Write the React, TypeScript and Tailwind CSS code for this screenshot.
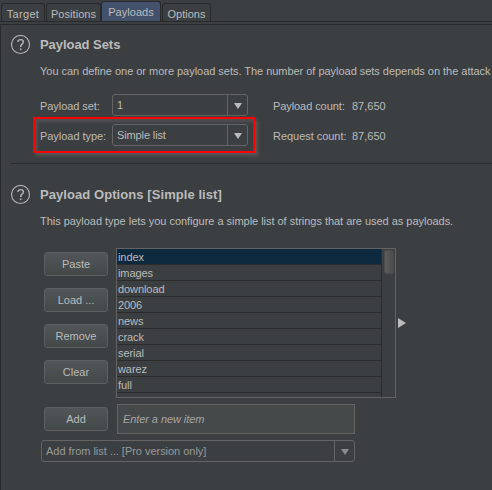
import React from "react";

const items = ["index", "images", "download", "2006", "news", "crack", "serial", "warez", "full"];

function Tab({ label, className }: { label: string; className: string }) {
  return (
    <div className={`flex justify-center rounded-t-[3px] border border-b-0 border-[#282a2c] ${className}`}>
      <span>{label}</span>
    </div>
  );
}

function HelpIcon() {
  return (
    <svg width="20" height="20" viewBox="0 0 20 20" fill="none" stroke="#b4b4b4" className="shrink-0">
      <circle cx="9.5" cy="9.5" r="9" strokeWidth="1.1" />
      <path d="M6.8 6.8C7 5.3 8 4.6 9.6 4.6C11.3 4.6 12.4 5.5 12.4 7C12.4 9 9.7 9.2 9.7 11.3V12" strokeWidth="1.4" />
      <path d="M8.9 14.3H10.5" strokeWidth="1.6" />
    </svg>
  );
}

function SectionTitle({ title, className }: { title: string; className: string }) {
  return (
    <div className="flex h-5 items-center gap-[9px] pl-2.5">
      <HelpIcon />
      <h2 className={`text-[13px] leading-5 font-bold text-[#bbbbbb] ${className}`}>{title}</h2>
    </div>
  );
}

function Combo({ label, className, muted }: { label: string; className: string; muted?: boolean }) {
  return (
    <div className={`flex h-[22px] rounded-[3px] border border-[#646464] ${className}`}>
      <div className="flex-1 pl-1 leading-[20px]">{label}</div>
      <div className="flex w-5 items-center justify-center border-l border-[#646464] pt-px">
        <svg width="8" height="6" viewBox="0 0 8 6">
          <path d="M0 0H8L4 6Z" fill={muted ? "#8c8c8c" : "#bbbbbb"} />
        </svg>
      </div>
    </div>
  );
}

function Button({ label }: { label: string }) {
  return (
    <button className="flex h-6 w-16 items-center justify-center rounded-[3px] border border-[#5e6060] bg-linear-to-b from-[#525658] to-[#434849]">
      {label}
    </button>
  );
}

export default function App() {
  return (
    <div className="flex h-[490px] w-[492px] flex-col overflow-hidden bg-[#3c3f41] font-['Liberation_Sans',Arial,sans-serif] text-[11px] leading-4 whitespace-nowrap text-[#bbbbbb]">
      <nav className="flex h-[22px] items-end border-b border-[#282a2c] pl-px">
        <Tab label="Target" className="h-[18px] w-11 pt-[2px] tracking-[0.3px]" />
        <Tab label="Positions" className="ml-px h-[18px] w-[55px] pt-[2px] tracking-[0.05px]" />
        <Tab label="Payloads" className="h-5 w-[60px] bg-[#44516c] pt-[2px] tracking-[0.05px]" />
        <Tab label="Options" className="ml-px h-[18px] w-[49px] pt-[2px]" />
      </nav>

      <main className="mt-0.5 flex flex-1 flex-col border-t border-l border-[#282a2c]">
        <section className="flex h-[138px] flex-col pt-[10px]">
          <SectionTitle title="Payload Sets" className="tracking-[-0.05px]" />
          <p className="mt-2 ml-[39px] tracking-[-0.03px]">
            You can define one or more payload sets. The number of payload sets depends on the attack
          </p>
          <div className="mt-[15px] flex items-center pl-[39px]">
            <span className="w-[72px] pt-px tracking-[-0.06px]">Payload set:</span>
            <Combo label="1" className="w-[136px]" />
            <span className="ml-[25px] w-[79px] pt-px tracking-[-0.08px]">Payload count:</span>
            <span className="pt-px">87,650</span>
          </div>
          <div className="mt-px flex items-center pl-8">
            <div className="flex h-9 w-[222px] items-center border-2 border-[#fe0000] pl-[5px] shadow-[3px_3px_3px_#565656,inset_3px_3px_3px_#505152]">
              <span className="w-[72px] pt-px tracking-[-0.04px]">Payload type:</span>
              <Combo label="Simple list" className="w-[136px] tracking-[-0.12px]" />
            </div>
            <span className="ml-[18px] w-[79px] pt-px tracking-[-0.04px]">Request count:</span>
            <span className="pt-px">87,650</span>
          </div>
        </section>
        <hr className="ml-2.5 border-[#2b2d2f]" />

        <section className="flex flex-col pt-[21px]">
          <SectionTitle title="Payload Options [Simple list]" className="tracking-[0.07px]" />
          <p className="mt-2 ml-[39px] tracking-[-0.03px]">
            This payload type lets you configure a simple list of strings that are used as payloads.
          </p>
          <div className="mt-[19px] flex pl-[43px]">
            <div className="flex flex-col gap-3 pt-1">
              <Button label="Paste" />
              <Button label="Load ..." />
              <Button label="Remove" />
              <Button label="Clear" />
            </div>
            <div className="ml-2 flex h-[150px] w-[280px] border border-[#646464]">
              <ul className="w-[265px] border-r border-[#2b2b2b]">
                {items.map((item, i) => (
                  <li key={item} className={`h-4 border-b border-[#2b2b2b] pl-px leading-[17px] tracking-[-0.08px] ${i === 0 ? "bg-[#0d293e]" : ""}`}>
                    {item}
                  </li>
                ))}
              </ul>
              <div className="flex-1 pt-px pl-0.5">
                <div className="h-6 w-2.5 rounded-[2px] border border-[#4c4c4c] bg-linear-to-r from-[#5b5b5b] to-[#4d4d4d]" />
              </div>
            </div>
            <svg width="8" height="10" viewBox="0 0 8 10" className="mt-[70px] ml-0.5">
              <path d="M0 0L8 5L0 10Z" fill="#bbbbbb" />
            </svg>
          </div>
          <div className="mt-[6px] flex items-center pl-[43px]">
            <Button label="Add" />
            <div className="ml-[9px] flex h-[30px] w-[238px] items-center border border-[#646464] bg-[#45494a] pl-[5px] tracking-[-0.08px] text-[#a5a5a5] italic">
              Enter a new item
            </div>
          </div>
          <div className="mt-[6px] pl-10 text-[#999999]">
            <Combo label="Add from list ... [Pro version only]" className="w-[314px] tracking-[-0.03px]" muted />
          </div>
        </section>
      </main>
    </div>
  );
}
